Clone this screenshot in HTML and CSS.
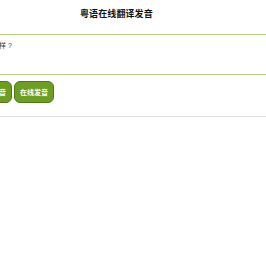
FILE: index.html
```html
<!DOCTYPE html>
<html lang="zh-CN">
<head>
  <meta charset="UTF-8" />
  <meta name="viewport" content="width=device-width, initial-scale=1.0"/>
  <title>粤语在线翻译发音</title>
  <link rel="stylesheet" href="styles.css">
</head>
<body>
  <div class="page">
    <h1 class="title">粤语在线翻译发音</h1>

    <div class="editor">
      <textarea class="source" rows="3">你好，怎么样 ?</textarea>
    </div>

    <div class="actions">
      <button class="btn" type="button">粤语发音</button>
      <button class="btn" type="button">在线发音</button>
    </div>

    <hr class="divider">
  </div>
</body>
</html>
```

FILE: styles.css
```css
/* page is shown scrolled a bit to the right, so left side is cut off */
body { margin: 0; font-family: "Liberation Sans", "Noto Sans CJK SC", sans-serif; background: #fff; color: #222; overflow: hidden; }
.page { width: 266px; }
.title { margin: 0; padding: 7px 0 0 80px; height: 27px; box-sizing: border-box; font-size: 9px; font-weight: bold; color: #111; letter-spacing: 0.1px; }
.editor { margin-left: -40px; margin-top: 7px; }
.source { display: block; width: 330px; height: 41px; box-sizing: border-box; margin: 0; padding: 5px 4px; border: 1px solid #b3cc8a; border-width: 1px 0; font-family: inherit; font-size: 7px; color: #333; resize: none; outline: none; }
.actions { display: flex; gap: 2px; margin-left: -28px; margin-top: 6px; }
.btn { width: 40px; height: 22px; padding: 0; background: #6b9e23; border: 1px solid #4f7a14; border-radius: 6px; color: #fff; font-family: inherit; font-size: 7px; font-weight: bold; cursor: pointer; }
.divider { margin: 13px 0 0; border: 0; border-top: 1px solid #ddd; height: 0; }
```
